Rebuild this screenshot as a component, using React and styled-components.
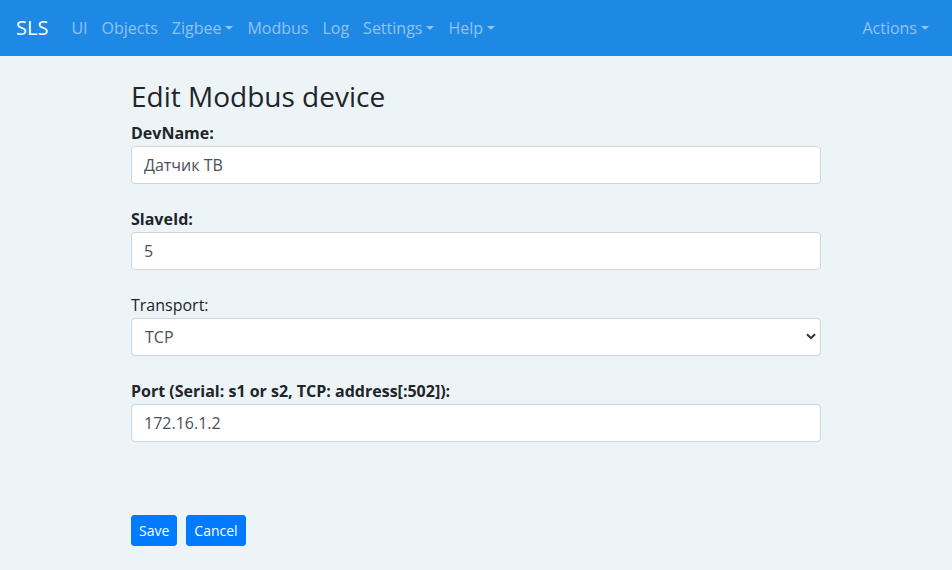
import React from "react";
import styled, { createGlobalStyle } from "styled-components";

const Global = createGlobalStyle`
  * { box-sizing: border-box; }
  body {
    margin: 0;
    background: #edf4f8;
    color: #212529;
    font-family: "Open Sans", "Noto Sans", sans-serif;
    font-size: 16px;
    line-height: 1.5;
  }
`;

const Navbar = styled.nav`
  display: flex;
  align-items: center;
  height: 56px;
  padding: 0 16px;
  background: #1e88e5;
`;

const Brand = styled.a`
  color: #fff;
  font-size: 20px;
  margin-right: 16px;
  text-decoration: none;
`;

const NavList = styled.div`
  display: flex;
  align-items: center;
  flex: 1;
`;

const NavLink = styled.a`
  display: flex;
  align-items: center;
  padding: 8px 7px;
  color: rgba(255, 255, 255, 0.5);
  text-decoration: none;
  font-size: 16px;
`;

const Caret = styled.span`
  display: inline-block;
  margin-left: 4px;
  border-top: 4.5px solid currentColor;
  border-left: 4px solid transparent;
  border-right: 4px solid transparent;
`;

const Container = styled.div`
  width: 720px;
  margin: 0 auto;
  padding: 24px 15px 0;
`;

const Title = styled.h3`
  margin: 0 0 7px;
  font-size: 28px;
  font-weight: 500;
  line-height: 1.2;
`;

const Group = styled.div`
  margin-bottom: 23px;
`;

const Label = styled.label`
  display: block;
  margin-bottom: 1px;
  font-weight: ${(p) => (p.$plain ? 400 : 700)};
`;

const Input = styled.input`
  display: block;
  width: 100%;
  height: 38px;
  padding: 6px 12px;
  font: inherit;
  color: #495057;
  background: #fff;
  border: 1px solid #ced4da;
  border-radius: 4px;
`;

const SelectWrap = styled.div`
  position: relative;
`;

const Select = styled.select`
  display: block;
  width: 100%;
  height: 38px;
  padding: 6px 13px;
  font: inherit;
  color: #495057;
  background: #fff;
  border: 1px solid #ced4da;
  border-radius: 4px;
  appearance: none;
`;

const Chevron = styled.svg`
  position: absolute;
  right: 5px;
  top: 15px;
  pointer-events: none;
`;

const Actions = styled.div`
  display: flex;
  gap: 9px;
  margin-top: 73px;
`;

const Button = styled.button`
  height: 31px;
  padding: 4px 7px;
  font: inherit;
  font-size: 14px;
  color: #fff;
  background: #007bff;
  border: 1px solid #007bff;
  border-radius: 3px;
`;

const links = [
  { t: "UI" },
  { t: "Objects" },
  { t: "Zigbee", d: true },
  { t: "Modbus" },
  { t: "Log" },
  { t: "Settings", d: true },
  { t: "Help", d: true },
];

export default function App() {
  return (
    <>
      <Global />
      <Navbar>
        <Brand>SLS</Brand>
        <NavList>
          {links.map((l) => (
            <NavLink key={l.t}>
              {l.t}
              {l.d && <Caret />}
            </NavLink>
          ))}
        </NavList>
        <NavLink>
          Actions
          <Caret />
        </NavLink>
      </Navbar>
      <Container>
        <Title>Edit Modbus device</Title>
        <Group>
          <Label>DevName:</Label>
          <Input defaultValue="Датчик ТВ" />
        </Group>
        <Group>
          <Label>SlaveId:</Label>
          <Input defaultValue="5" />
        </Group>
        <Group>
          <Label $plain>Transport:</Label>
          <SelectWrap>
            <Select defaultValue="TCP">
              <option>Serial</option>
              <option>TCP</option>
            </Select>
            <Chevron width="10" height="7" viewBox="0 0 10 7">
              <path d="M1 1.2 L5 5.2 L9 1.2" fill="none" stroke="#333" strokeWidth="2" />
            </Chevron>
          </SelectWrap>
        </Group>
        <Group>
          <Label>Port (Serial: s1 or s2, TCP: address[:502]):</Label>
          <Input defaultValue="172.16.1.2" />
        </Group>
        <Actions>
          <Button>Save</Button>
          <Button>Cancel</Button>
        </Actions>
      </Container>
    </>
  );
}
